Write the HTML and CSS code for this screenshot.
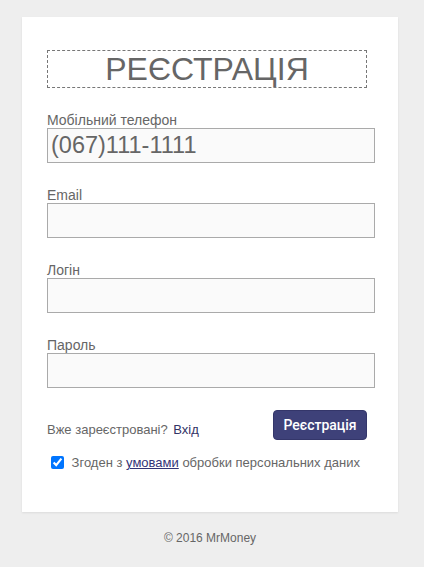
FILE: index.html
```html
<!DOCTYPE html>
<html lang="uk">
<head>
<meta charset="utf-8">
<title>Реєстрація</title>
<link rel="stylesheet" href="styles.css">
</head>
<body>
<div class="page">
  <form class="card">
    <h1 class="title">РЕЄСТРАЦІЯ</h1>
    <div class="field">
      <label class="label">Мобільний телефон</label>
      <input class="input input-phone" type="text" value="(067)111-1111">
    </div>
    <div class="field">
      <label class="label">Email</label>
      <input class="input" type="text">
    </div>
    <div class="field">
      <label class="label">Логін</label>
      <input class="input" type="text">
    </div>
    <div class="field">
      <label class="label">Пароль</label>
      <input class="input" type="password">
    </div>
    <div class="actions">
      <span class="already">Вже зареєстровані? <a class="login" href="#">Вхід</a></span>
      <button class="btn" type="button">Реєстрація</button>
    </div>
    <label class="agree"><input class="check" type="checkbox" checked> Згоден з <a class="terms" href="#">умовами</a> обробки персональних даних</label>
  </form>
  <div class="footer">© 2016 MrMoney</div>
</div>
</body>
</html>
```
FILE: styles.css
```css
html, body {
  margin: 0;
  padding: 0;
  background: #eeeeee;
  font-family: "Liberation Sans", Arial, sans-serif;
  color: #666;
}
.page {
  padding: 17px 0 0 22px;
}
.card {
  width: 376px;
  box-sizing: border-box;
  background: #fff;
  box-shadow: 0 1px 2px rgba(0,0,0,0.08);
  padding: 33px 23px 42px 25px;
  display: flex;
  flex-direction: column;
}
.title {
  margin: 0 0 24px 0;
  width: 320px;
  box-sizing: border-box;
  height: 38px;
  border: 1px dashed #777;
  font-weight: normal;
  font-size: 32px;
  line-height: 36px;
  text-align: center;
  color: #666;
}
.field {
  display: flex;
  flex-direction: column;
  margin-bottom: 24px;
}
.label {
  font-size: 14px;
  line-height: 16px;
  color: #666;
}
.input {
  margin: 0;
  width: 328px;
  height: 35px;
  box-sizing: border-box;
  border: 1px solid #aaa;
  background: #fafafa;
  padding: 0 3px;
  font-family: "Liberation Sans", Arial, sans-serif;
  color: #666;
  font-size: 14px;
  outline: none;
}
.input-phone {
  font-size: 23.5px;
}
.actions {
  width: 320px;
  display: flex;
  justify-content: space-between;
  align-items: flex-end;
  margin-top: -2px;
}
.already {
  font-size: 13px;
  color: #666;
  line-height: 16px;
  padding-bottom: 2px;
}
.login {
  color: #333366;
  text-decoration: none;
  margin-left: 2px;
}
.btn {
  width: 94px;
  height: 30px;
  background: #3e4179;
  color: #fff;
  border: 1px solid #34366a;
  border-radius: 4px;
  font-family: Roboto, "Liberation Sans", sans-serif;
  font-weight: 500;
  font-size: 14px;
  padding: 0;
}
.agree {
  margin-top: 15px;
  margin-left: 4px;
  font-size: 13px;
  color: #666;
  display: flex;
  align-items: center;
  white-space: pre;
}
.check {
  margin: 0 4px 0 0;
  width: 13px;
  height: 13px;
}
.terms {
  color: #333377;
  text-decoration: underline;
}
.footer {
  width: 376px;
  text-align: center;
  font-size: 12px;
  color: #666;
  margin-top: 19px;
}
```
